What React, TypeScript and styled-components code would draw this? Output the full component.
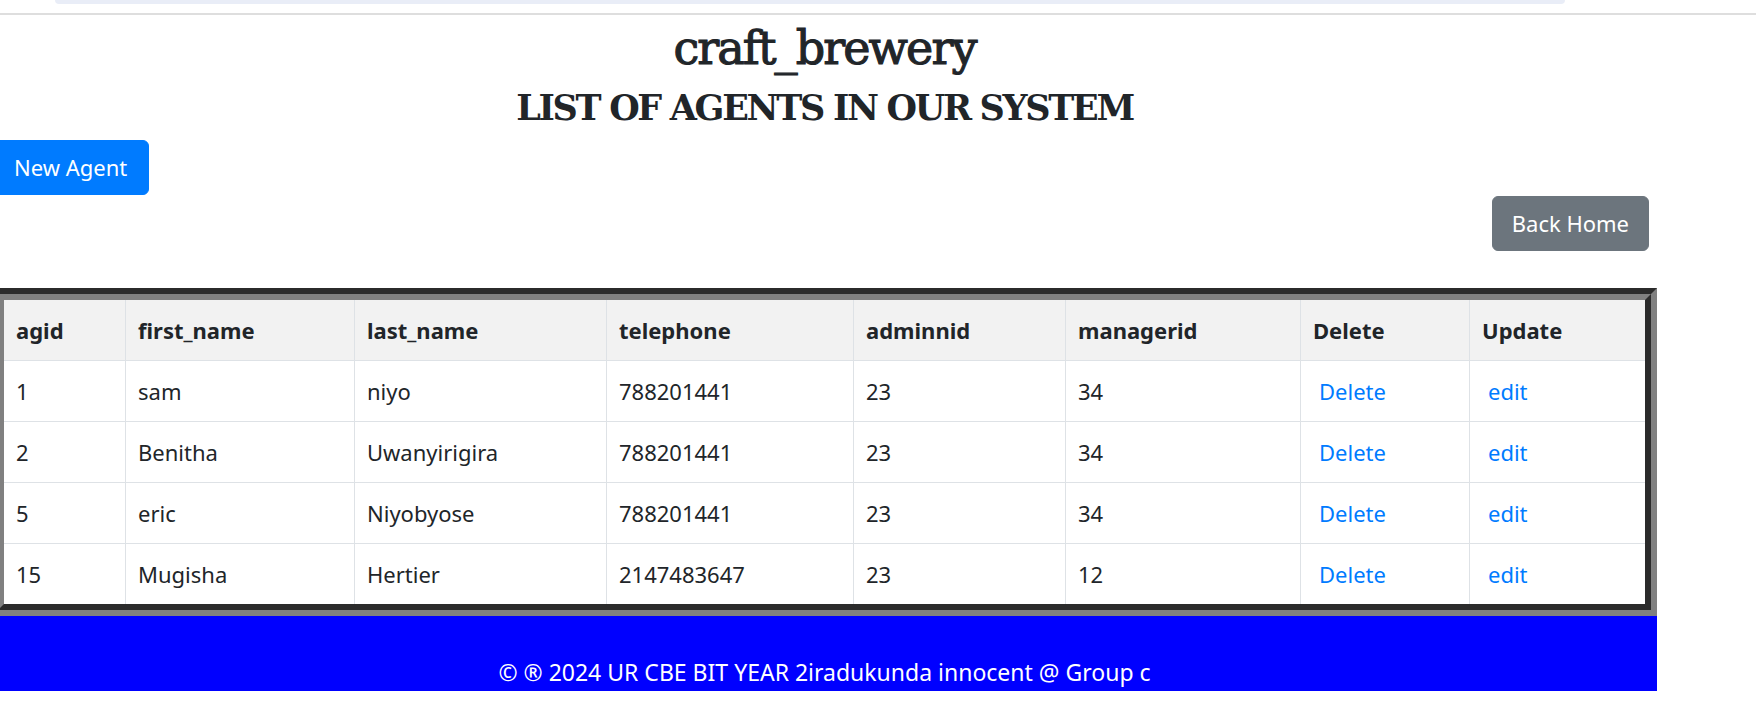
import React from "react";
import styled, { createGlobalStyle } from "styled-components";

const GlobalStyle = createGlobalStyle`
  *, *::before, *::after { box-sizing: border-box; }
  html, body { margin: 0; padding: 0; background: #ffffff; }
  body {
    font-family: "Noto Sans", "Open Sans", Arial, sans-serif;
    font-size: 22px;
    color: #212529;
    overflow: hidden;
  }
`;

const BrowserEdge = styled.div`
  height: 15px;
  border-bottom: 2px solid #dedede;
`;

const AddressPill = styled.div`
  margin-left: 55px;
  width: 1510px;
  height: 4px;
  background: #e9edf7;
  border-radius: 0 0 12px 12px;
`;

const Page = styled.div`
  margin-left: -8px;
  width: 1665px;
`;

const Title = styled.h1`
  margin: 6px 0 0;
  font-family: "DejaVu Serif", "Liberation Serif", serif;
  font-weight: normal;
  font-size: 46px;
  line-height: 54px;
  letter-spacing: -1.9px;
  -webkit-text-stroke: 1.1px #212529;
  text-align: center;
  color: #212529;
`;

const Subtitle = styled.h2`
  margin: 13px 0 0;
  font-family: "DejaVu Serif", "Liberation Serif", serif;
  font-weight: bold;
  font-size: 35px;
  line-height: 40px;
  letter-spacing: -2.3px;
  text-align: center;
  color: #212529;
`;

const Button = styled.button<{ $variant: "primary" | "secondary" }>`
  display: inline-block;
  font-family: "Noto Sans", "Open Sans", Arial, sans-serif;
  font-size: 22px;
  line-height: 33px;
  padding: 10px ${(p) => (p.$variant === "primary" ? "21px" : "19px")};
  border: 1px solid ${(p) => (p.$variant === "primary" ? "#007bff" : "#6c757d")};
  background: ${(p) => (p.$variant === "primary" ? "#007bff" : "#6c757d")};
  color: #ffffff;
  border-radius: 6px;
  cursor: pointer;
`;

const NewRow = styled.div`
  margin-top: 12px;
  display: flex;
`;

const BackRow = styled.div`
  margin-top: 1px;
  display: flex;
  justify-content: flex-end;
  padding-right: 8px;
`;

const FrameOuter = styled.div`
  margin-top: 37px;
  border-style: solid;
  border-width: 6px;
  border-color: #2b2b2b #808080 #808080 #2b2b2b;
`;

const FrameInner = styled.div`
  border-style: solid;
  border-width: 6px;
  border-color: #808080 #2b2b2b #2b2b2b #808080;
`;

const Table = styled.table`
  width: 100%;
  table-layout: fixed;
  border-collapse: separate;
  border-spacing: 0;
  background: #ffffff;
`;

const Col = styled.col<{ $w: number }>`
  width: ${(p) => p.$w}px;
`;

const HeadCell = styled.th`
  background: #f2f2f2;
  text-align: left;
  font-weight: bold;
  font-size: 22px;
  line-height: 30px;
  padding: 15px 12px;
  color: #212529;
  border-left: 1px solid #dee2e6;
  &:first-child { border-left: none; }
`;

const Cell = styled.td`
  font-size: 22px;
  line-height: 30px;
  padding: 15px 12px;
  color: #212529;
  border-top: 1px solid #dee2e6;
  border-left: 1px solid #dee2e6;
  &:first-child { border-left: none; }
`;

const ActionLink = styled.a`
  color: #007bff;
  text-decoration: none;
  margin-left: 6px;
  cursor: pointer;
`;

const Footer = styled.footer`
  background: #0000ff;
  height: 75px;
  padding-top: 40px;
  text-align: center;
  color: #ffffff;
  font-size: 23px;
  line-height: 33px;
`;

const widths = [121, 229, 252, 247, 212, 235, 169, 176];
const headers = ["agid", "first_name", "last_name", "telephone", "adminnid", "managerid", "Delete", "Update"];

const rows = [
  { agid: "1", first: "sam", last: "niyo", tel: "788201441", admin: "23", manager: "34" },
  { agid: "2", first: "Benitha", last: "Uwanyirigira", tel: "788201441", admin: "23", manager: "34" },
  { agid: "5", first: "eric", last: "Niyobyose", tel: "788201441", admin: "23", manager: "34" },
  { agid: "15", first: "Mugisha", last: "Hertier", tel: "2147483647", admin: "23", manager: "12" },
];

export default function App() {
  return (
    <>
      <GlobalStyle />
      <BrowserEdge>
        <AddressPill />
      </BrowserEdge>
      <Page>
        <Title>craft_brewery</Title>
        <Subtitle>LIST OF AGENTS IN OUR SYSTEM</Subtitle>
        <NewRow>
          <Button $variant="primary">New Agent</Button>
        </NewRow>
        <BackRow>
          <Button $variant="secondary">Back Home</Button>
        </BackRow>
        <FrameOuter>
          <FrameInner>
            <Table>
              <colgroup>
                {widths.map((w, i) => (
                  <Col key={i} $w={w} />
                ))}
              </colgroup>
              <thead>
                <tr>
                  {headers.map((h) => (
                    <HeadCell key={h}>{h}</HeadCell>
                  ))}
                </tr>
              </thead>
              <tbody>
                {rows.map((r) => (
                  <tr key={r.agid}>
                    <Cell>{r.agid}</Cell>
                    <Cell>{r.first}</Cell>
                    <Cell>{r.last}</Cell>
                    <Cell>{r.tel}</Cell>
                    <Cell>{r.admin}</Cell>
                    <Cell>{r.manager}</Cell>
                    <Cell>
                      <ActionLink>Delete</ActionLink>
                    </Cell>
                    <Cell>
                      <ActionLink>edit</ActionLink>
                    </Cell>
                  </tr>
                ))}
              </tbody>
            </Table>
          </FrameInner>
        </FrameOuter>
        <Footer>© ® 2024 UR CBE BIT YEAR 2iradukunda innocent @ Group c</Footer>
      </Page>
    </>
  );
}
